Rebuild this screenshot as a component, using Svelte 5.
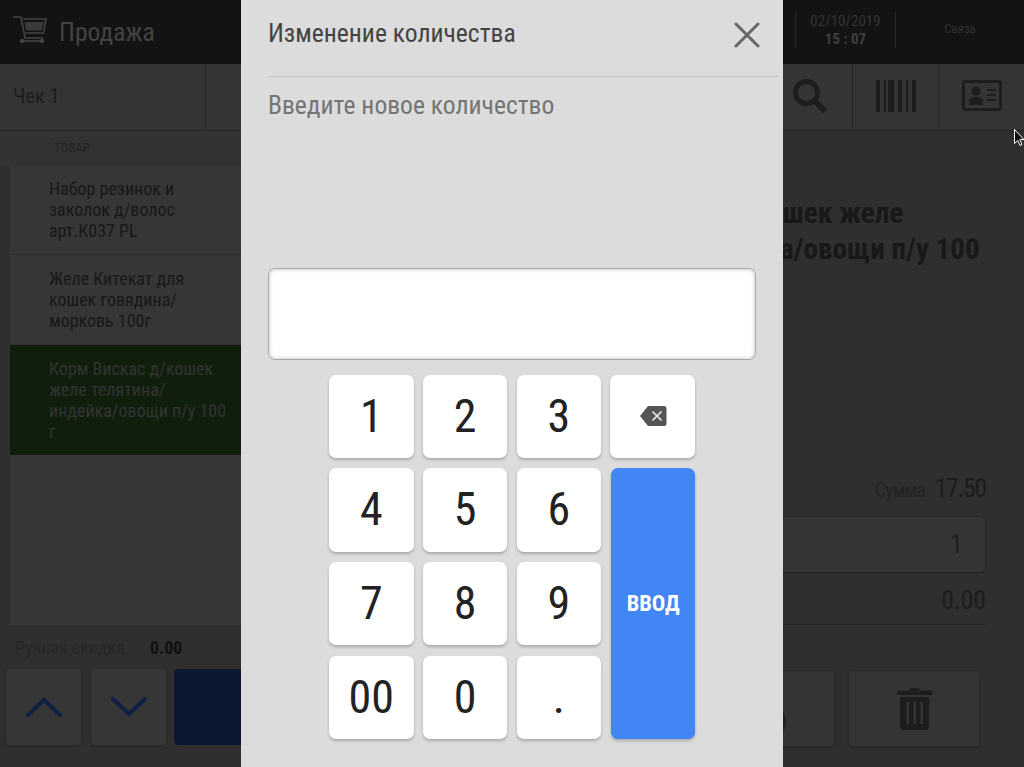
<script>
  const items = [
    { name: 'Набор резинок и заколок д/волос арт.К037 PL', h: 90 },
    { name: 'Желе Китекат для кошек говядина/морковь 100г', h: 90 },
    { name: 'Корм Вискас д/кошек желе телятина/индейка/овощи п/у 100 г', h: 110, active: true }
  ];
  const keys = ['1','2','3','4','5','6','7','8','9','00','0','.'];
</script>

<div class="app">
  <header class="top">
    <div class="brand">
      <svg class="cart" width="34" height="30" viewBox="0 0 34 30" fill="none">
        <path d="M0 2h8l4 21h18" stroke="#444" stroke-width="1.6"/>
        <path d="M10 4h23l-2.500 14H12.500" stroke="#444" stroke-width="1.6"/>
        <path d="M11.500 7h19l-1.600 8.500H13z" fill="#3a3a3a"/>
        <circle cx="9" cy="26" r="2.200" fill="#444"/>
        <circle cx="29" cy="26" r="2.200" fill="#444"/>
        <path d="M9 26h20" stroke="#444" stroke-width="1.600"/>
      </svg>
      <span>Продажа</span>
    </div>
    <div class="status">
      <div class="clock"><span class="date">02/10/2019</span><b>15 : 07</b></div>
      <div class="link">Связь</div>
    </div>
  </header>

  <div class="bar">
    <div class="tab">Чек 1</div>
    <div class="tools">
      <div class="tool">
        <svg width="36" height="36" viewBox="0 0 36 36" fill="none">
          <circle cx="14.500" cy="14.500" r="11" stroke="#1d1d1d" stroke-width="5"/>
          <path d="M23 23l10 10" stroke="#1d1d1d" stroke-width="5.500"/>
        </svg>
      </div>
      <div class="tool">
        <svg width="40" height="32" viewBox="0 0 40 32" fill="#1d1d1d">
          <rect x="0" width="4" height="32"/><rect x="8" width="2" height="32"/>
          <rect x="12" width="6" height="32"/><rect x="22" width="4" height="32"/>
          <rect x="30" width="2" height="32"/><rect x="36" width="4" height="32"/>
        </svg>
      </div>
      <div class="tool">
        <svg width="40" height="32" viewBox="0 0 40 32" fill="none">
          <rect x="1.500" y="1.500" width="37" height="28" rx="2" stroke="#1d1d1d" stroke-width="3"/>
          <circle cx="14" cy="11" r="4.500" fill="#1d1d1d"/>
          <path d="M7 25v-3.500c0-3 3-4.500 7-4.500s7 1.500 7 4.500V25z" fill="#1d1d1d"/>
          <path d="M25 10h9M25 15h9M25 20h9" stroke="#1d1d1d" stroke-width="2"/>
        </svg>
      </div>
    </div>
  </div>

  <main class="main">
    <section class="left">
      <div class="thead"><span>ТОВАР</span></div>
      <div class="list">
        {#each items as item}
          <div class="row" class:active={item.active} style="height: {item.h}px"><span>{item.name}</span></div>
        {/each}
      </div>
      <div class="discount"><span>Ручная скидка</span><b>0.00</b></div>
      <div class="actions">
        <button class="sq" aria-label="Вверх">
          <svg width="36" height="20" viewBox="0 0 36 20" fill="none"><path d="M2 18L18 3l16 15" stroke="#0e2044" stroke-width="4" stroke-linecap="round"/></svg>
        </button>
        <button class="sq" aria-label="Вниз">
          <svg width="36" height="20" viewBox="0 0 36 20" fill="none"><path d="M2 2l16 15L34 2" stroke="#0e2044" stroke-width="4" stroke-linecap="round"/></svg>
        </button>
        <button class="pay" aria-label="Оплата"></button>
      </div>
    </section>

    <section class="right">
      <h1>Корм Вискас д/кошек желе<br />телятина/индейка/овощи п/у 100<br />г</h1>
      <div class="sum"><span>Сумма</span><b>17.50</b></div>
      <div class="qty">1</div>
      <div class="disc">0.00</div>
      <div class="rbtns">
        <button class="rbtn" aria-label="Действие"><i class="dot"></i></button>
        <button class="rbtn trash" aria-label="Удалить">
          <svg width="35" height="42" viewBox="0 0 35 42" fill="#1d1d1d">
            <path d="M12 2.500C12.500 1 13.500 0 15 0h5c1.500 0 2.500 1 3 2.500h12V7H0V2.500z"/>
            <path d="M3 9h29v30c0 1.600-1.400 3-3 3H6c-1.600 0-3-1.400-3-3zm6.500 5v22h2.500V14zm7 0v22H19V14zm7 0v22H26V14z" fill-rule="evenodd"/>
          </svg>
        </button>
      </div>
    </section>
  </main>

  <svg class="pointer" width="11" height="18" viewBox="0 0 11 18">
    <path d="M.5.500v14l3.300-3 2.200 5 2-.9-2.200-5H10z" fill="#111" stroke="#fff" stroke-width="1"/>
  </svg>

  <div class="modal">
    <div class="mhead">
      <span>Изменение количества</span>
      <svg width="26" height="26" viewBox="0 0 26 26" fill="none"><path d="M2 2l22 22M24 2L2 24" stroke="#666" stroke-width="3" stroke-linecap="round"/></svg>
    </div>
    <div class="hint">Введите новое количество</div>
    <div class="field"></div>
    <div class="pad">
      {#each keys as k, i}
        <button class="key" style="grid-column: {i % 3 + 1}; grid-row: {Math.floor(i / 3) + 1}">{k}</button>
      {/each}
      <button class="key back" aria-label="Удалить символ">
        <svg width="28" height="22" viewBox="0 0 28 22">
          <path d="M9 1h16a2.500 2.500 0 0 1 2.500 2.500v15A2.500 2.500 0 0 1 25 21H9L1 11z" fill="#555"/>
          <path d="M13.500 6.500l9 9M22.500 6.500l-9 9" stroke="#eee" stroke-width="1.600"/>
        </svg>
      </button>
      <button class="key enter">ВВОД</button>
    </div>
  </div>
</div>

<style>
  :global(body) {
    margin: 0;
    background: #2f2f2f;
  }
  .app {
    position: relative;
    width: 1024px;
    height: 767px;
    overflow: hidden;
    display: flex;
    flex-direction: column;
    font-family: Roboto, "Noto Sans", sans-serif;
    font-stretch: 75%;
    color: #1c1c1c;
    background: #2f2f2f;
  }
  button {
    font: inherit;
    font-stretch: inherit;
    border: 0;
    padding: 0;
  }
  .top {
    height: 64px;
    flex: none;
    background: #131313;
    display: flex;
    justify-content: space-between;
    align-items: center;
  }
  .brand {
    display: flex;
    align-items: center;
    padding-left: 13px;
    gap: 12px;
    font-size: 25.600px;
    color: #434343;
  }
  .cart {
    margin-bottom: 4px;
  }
  .status {
    display: flex;
    align-items: center;
    align-self: flex-start;
    margin-top: 12px;
    height: 36px;
  }
  .clock {
    width: 99px;
    height: 36px;
    border-left: 1px solid #2b2b2b;
    border-right: 1px solid #2b2b2b;
    display: flex;
    flex-direction: column;
    align-items: center;
    justify-content: center;
    font-size: 15px;
    line-height: 18px;
    color: #333;
  }
  .clock b {
    color: #3f3f3f;
  }
  .link {
    width: 128px;
    text-align: center;
    font-size: 12.800px;
    color: #303030;
    padding-bottom: 3px;
  }
  .bar {
    height: 66px;
    flex: none;
    display: flex;
    justify-content: space-between;
    background: #343434;
    border-bottom: 1px solid #262626;
  }
  .tab {
    width: 192px;
    padding: 0 0 2px 13px;
    border-right: 1px solid #262626;
    display: flex;
    align-items: center;
    font-size: 20.500px;
  }
  .tools {
    display: flex;
  }
  .tool {
    width: 85px;
    border-left: 1px solid #2a2a2a;
    display: flex;
    align-items: center;
    justify-content: center;
    padding-bottom: 2px;
  }
  .tool:first-child {
    border-left: 0;
  }
  .main {
    flex: 1;
    display: flex;
    min-height: 0;
  }
  .left {
    width: 440px;
    flex: none;
    display: flex;
    flex-direction: column;
  }
  .thead {
    height: 32px;
    padding: 0 0 2px 54px;
    flex: none;
    display: flex;
    align-items: center;
    font-size: 13px;
    color: #232323;
    background: #323232;
  }
  .list {
    margin-left: 10px;
    height: 460px;
    background: #363636;
    border-bottom: 1px solid #2c2c2c;
    flex: none;
  }
  .row {
    box-sizing: border-box;
    display: flex;
    align-items: center;
    padding: 0 212px 0 39px;
    font-size: 18px;
    line-height: 21px;
    color: #181818;
    border-bottom: 1px solid #2f2f2f;
  }
  .row.active {
    background: #0f1f0c;
    color: #333;
    border-bottom: 0;
  }
  .discount {
    height: 43px;
    flex: none;
    display: flex;
    align-items: center;
    gap: 25px;
    padding-left: 15px;
    font-size: 18px;
    color: #262626;
  }
  .discount b {
    color: #111;
  }
  .actions {
    display: flex;
    height: 76px;
    padding-left: 6px;
  }
  .sq {
    width: 75px;
    margin-right: 10px;
    background: #363636;
    border-radius: 4px;
    box-shadow: 0 1px 3px #222;
    display: flex;
    align-items: center;
    justify-content: center;
  }
  .sq + .sq {
    margin-right: 8px;
  }
  .pay {
    flex: 1;
    background: #0c1730;
    border-radius: 4px;
    margin-right: 10px;
  }
  .right {
    flex: 1;
    display: flex;
    flex-direction: column;
    align-items: flex-end;
    padding-right: 38px;
  }
  h1 {
    margin: 64px 0 0 130px;
    align-self: flex-start;
    font-size: 29.200px;
    line-height: 36px;
    font-weight: 700;
    text-indent: -6px;
    color: #181818;
    white-space: nowrap;
  }
  .sum {
    margin-top: 170px;
    display: flex;
    align-items: baseline;
    gap: 10px;
    font-size: 25.600px;
    line-height: 30px;
  }
  .sum span {
    font-size: 20px;
    letter-spacing: -1.100px;
    color: #232323;
  }
  .sum b {
    font-weight: 400;
    letter-spacing: -1.200px;
  }
  .qty {
    box-sizing: border-box;
    margin-top: 11px;
    width: 100%;
    height: 57px;
    border: 1px solid #2a2a2a;
    border-bottom-color: #222;
    border-radius: 6px;
    background: #353535;
    text-align: right;
    padding-right: 22px;
    font-size: 25.600px;
    line-height: 55px;
  }
  .disc {
    box-sizing: border-box;
    width: 100%;
    height: 52px;
    text-align: right;
    font-size: 25.600px;
    line-height: 54px;
    border-bottom: 1px solid #262626;
  }
  .rbtns {
    display: flex;
    gap: 15px;
    margin-top: 46px;
    align-self: stretch;
    justify-content: flex-end;
    padding-right: 7px;
  }
  .rbtn {
    position: relative;
    width: 130px;
    height: 75px;
    background: #343434;
    border-radius: 3px;
    box-shadow: 0 1px 3px #222;
    display: flex;
    align-items: center;
    justify-content: center;
  }
  .dot {
    position: absolute;
    left: 46px;
    top: 33px;
    width: 36px;
    height: 36px;
    background: #222;
    border-radius: 50%;
  }
  .pointer {
    position: absolute;
    left: 1014px;
    top: 129px;
  }
  .modal {
    position: absolute;
    left: 241px;
    top: 0;
    width: 542px;
    height: 767px;
    box-sizing: border-box;
    padding: 0 5px 0 27px;
    background: #dcdcdc;
    display: flex;
    flex-direction: column;
  }
  .mhead {
    height: 77px;
    flex: none;
    box-sizing: border-box;
    border-bottom: 1px solid #c4c4c4;
    display: flex;
    align-items: flex-start;
    justify-content: space-between;
    padding: 16px 18px 0 0;
    font-size: 25.600px;
    line-height: 34px;
    color: #444;
  }
  .mhead svg {
    margin-top: 6px;
  }
  .hint {
    padding-top: 11px;
    height: 179px;
    box-sizing: border-box;
    font-size: 25.600px;
    line-height: 34px;
    color: #757575;
    flex: none;
  }
  .field {
    box-sizing: border-box;
    margin-top: 12px;
    width: 488px;
    height: 92px;
    background: #fff;
    border: 1px solid #a8a8a8;
    border-radius: 7px;
    box-shadow: inset 0 0 4px #bbb;
    flex: none;
  }
  .pad {
    margin: 14.600px 0 0 61px;
    width: 366px;
    display: grid;
    grid-template-columns: repeat(4, 1fr);
    grid-template-rows: repeat(4, 83.400px);
    column-gap: 9.330px;
    row-gap: 10.300px;
  }
  .key {
    background: #fff;
    border-radius: 7px;
    box-shadow: 0 2px 3px #aaa;
    padding-bottom: 1px;
    font-size: 46px;
    color: #222;
    display: flex;
    align-items: center;
    justify-content: center;
  }
  .back {
    grid-column: 4;
    grid-row: 1;
    padding: 0;
  }
  .enter {
    grid-column: 4;
    grid-row: 2 / 5;
    margin-left: 1px;
    background: #4285f4;
    color: #fff;
    font-size: 22.400px;
    font-weight: 700;
  }
</style>
